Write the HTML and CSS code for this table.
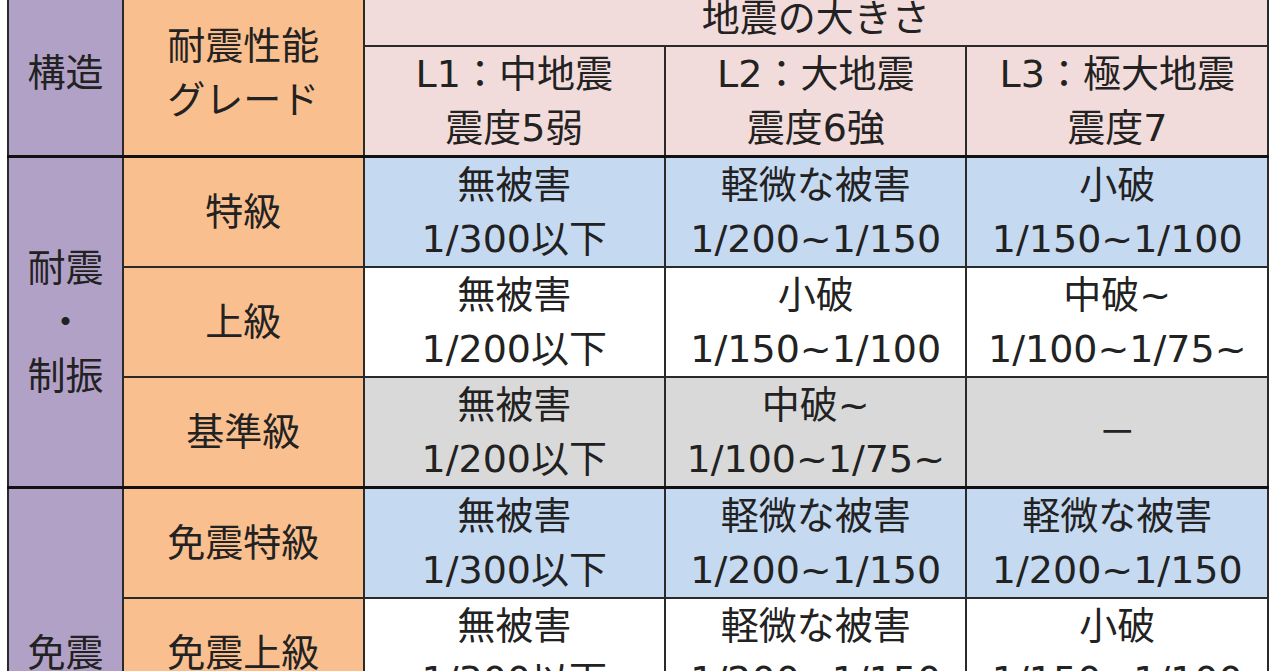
FILE: index.html
```html
<!DOCTYPE html>
<html lang="ja">
<head>
<meta charset="utf-8">
<link rel="stylesheet" href="styles.css">
</head>
<body>
<div class="page">
<table class="grid">
  <colgroup>
    <col class="c-struct">
    <col class="c-grade">
    <col class="c-lvl">
    <col class="c-lvl">
    <col class="c-lvl">
  </colgroup>
  <thead>
    <tr>
      <th class="struct" rowspan="2">構造</th>
      <th class="grade" rowspan="2">耐震性能<br>グレード</th>
      <th class="head" colspan="3">地震の大きさ</th>
    </tr>
    <tr class="head-end">
      <th class="head">L1：中地震<br>震度5弱</th>
      <th class="head">L2：大地震<br>震度6強</th>
      <th class="head">L3：極大地震<br>震度7</th>
    </tr>
  </thead>
  <tbody class="group">
    <tr>
      <th class="struct" rowspan="3">耐震<br>・<br>制振</th>
      <th class="grade">特級</th>
      <td class="blue">無被害<br>1/300以下</td>
      <td class="blue">軽微な被害<br>1/200~1/150</td>
      <td class="blue">小破<br>1/150~1/100</td>
    </tr>
    <tr>
      <th class="grade">上級</th>
      <td class="white">無被害<br>1/200以下</td>
      <td class="white">小破<br>1/150~1/100</td>
      <td class="white">中破~<br>1/100~1/75~</td>
    </tr>
    <tr>
      <th class="grade">基準級</th>
      <td class="gray">無被害<br>1/200以下</td>
      <td class="gray">中破~<br>1/100~1/75~</td>
      <td class="gray">－</td>
    </tr>
  </tbody>
  <tbody class="group">
    <tr>
      <th class="struct" rowspan="3">免震</th>
      <th class="grade">免震特級</th>
      <td class="blue">無被害<br>1/300以下</td>
      <td class="blue">軽微な被害<br>1/200~1/150</td>
      <td class="blue">軽微な被害<br>1/200~1/150</td>
    </tr>
    <tr>
      <th class="grade">免震上級</th>
      <td class="white">無被害<br>1/300以下</td>
      <td class="white">軽微な被害<br>1/200~1/150</td>
      <td class="white">小破<br>1/150~1/100</td>
    </tr>
    <tr>
      <th class="grade">免震基準級</th>
      <td class="gray">無被害<br>1/200以下</td>
      <td class="gray">小破<br>1/150~1/100</td>
      <td class="gray">中破~<br>1/100~1/75~</td>
    </tr>
  </tbody>
</table>
</div>
</body>
</html>
```

FILE: styles.css
```css
html, body {
  margin: 0;
  padding: 0;
  background: #ffffff;
  overflow: hidden;
}

.page {
  width: 1280px;
  height: 671px;
  overflow: hidden;
  padding-left: 7px;
  box-sizing: border-box;
}

.grid {
  margin-top: -12px;
  border-collapse: collapse;
  table-layout: fixed;
  width: 1262px;
  font-family: "DejaVu Sans", "Noto Sans CJK JP", sans-serif;
  font-size: 38px;
  font-weight: 400;
  color: #222222;
}

.c-struct { width: 115px; }
.c-grade { width: 240px; }
.c-lvl { width: 301px; }

.grid th,
.grid td {
  border: 2px solid #2a2a2a;
  padding: 0;
  line-height: 54px;
  text-align: center;
  vertical-align: middle;
  font-weight: 400;
  white-space: nowrap;
}

.head-end th,
.head-end td {
  border-bottom: 3px solid #111111;
}

.group tr:first-child th,
.group tr:first-child td {
  border-top: 3px solid #111111;
}

.grid thead tr:first-child th {
  border-top: 3px solid #111111;
}

.struct { background: #b2a1c7; }
.grade { background: #fabf8f; }
.head { background: #f2dcdb; }
.blue { background: #c5d9f1; }
.white { background: #ffffff; }
.gray { background: #d9d9d9; }
```
